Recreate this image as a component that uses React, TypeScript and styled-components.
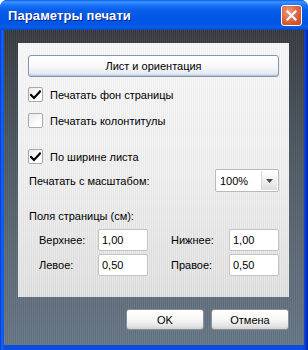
import styled, { createGlobalStyle } from "styled-components";

// ── Global ────────────────────────────────────────────────────────────────────

const GlobalStyle = createGlobalStyle`
  html, body { margin: 0; padding: 0; background: #ffffff; }
  * { box-sizing: border-box; }
  body { font-family: "Liberation Sans", Arial, sans-serif; font-size: 11px; color: #000; }
`;

// ── Window chrome ─────────────────────────────────────────────────────────────

const Window = styled.div`
  width: 308px;
  height: 350px;
  display: flex;
  flex-direction: column;
  border-radius: 7px 7px 0 0;
  overflow: hidden;
  background: linear-gradient(90deg, #0831d9 0, #166aee 2px, #0a4ee0 4px, #0a4ee0 303px, #0b39c6 306px, #001ea0 308px);
`;

const TitleBar = styled.div`
  height: 30px;
  flex: none;
  display: flex;
  align-items: center;
  justify-content: space-between;
  padding: 0 6px 0 8px;
  background: linear-gradient(
    180deg,
    #0a5fe8 0,
    #3d95ff 2px,
    #1b74fa 5px,
    #0a5fe8 10px,
    #0058e6 18px,
    #0055e5 24px,
    #0a5fe8 27px,
    #0646c8 30px
  );
`;

const Title = styled.span`
  font-family: "Liberation Sans", Arial, sans-serif;
  font-weight: bold;
  font-size: 13px;
  color: #ffffff;
  text-shadow: 1px 1px 0 #0a1e8a;
  letter-spacing: 0.1px;
`;

const CloseBtn = styled.div`
  width: 21px;
  height: 21px;
  border: 1px solid #ffffff;
  border-radius: 3px;
  background: radial-gradient(circle at 35% 30%, #f09a7a 0, #e06a44 45%, #c8401c 100%);
  display: flex;
  align-items: center;
  justify-content: center;
`;

const Frame = styled.div`
  flex: 1;
  margin: 0 4px 5px 4px;
  display: flex;
  flex-direction: column;
  background:
    repeating-linear-gradient(90deg, rgba(255, 255, 255, 0.06) 0 1px, rgba(0, 0, 0, 0.06) 1px 2px),
    linear-gradient(180deg, #363a3f 0, #4b5660 35%, #5c6a77 70%, #667686 100%);
`;

// ── Panel ─────────────────────────────────────────────────────────────────────

const Panel = styled.div`
  margin: 13px 15px 0 14px;
  height: 254px;
  padding: 12px 10px 0 10px;
  display: flex;
  flex-direction: column;
  background:
    repeating-linear-gradient(90deg, rgba(255, 255, 255, 0.35) 0 1px, rgba(0, 0, 0, 0.015) 1px 2px),
    linear-gradient(180deg, #f5f5f5 0, #ececec 50%, #dadada 100%);
`;

const WideButton = styled.button`
  height: 22px;
  width: 100%;
  font-family: inherit;
  font-size: 11px;
  color: #000;
  border: 1px solid #8197b3;
  border-radius: 3px;
  background: linear-gradient(180deg, #ffffff 0, #f8f9fb 50%, #e6ebf2 85%, #cfd8e4 100%);
  box-shadow: inset 0 -1px 0 #b7c4d6;
  padding: 0;
`;

const CheckRow = styled.div<{ $mt: number }>`
  display: flex;
  align-items: center;
  gap: 7px;
  height: 15px;
  margin-top: ${(p) => p.$mt}px;
`;

const Box = styled.div`
  width: 15px;
  height: 15px;
  border: 1px solid #a9a9a9;
  border-radius: 2px;
  background: linear-gradient(135deg, #e8e8e8 0, #ffffff 70%);
  display: flex;
  align-items: center;
  justify-content: center;
`;

const Label = styled.span`
  font-size: 11px;
  color: #000;
  white-space: nowrap;
`;

const ScaleRow = styled.div`
  display: flex;
  align-items: center;
  justify-content: space-between;
  margin-top: 5px;
  padding-left: 1px;
`;

const Select = styled.div`
  width: 64px;
  height: 23px;
  border: 1px solid #b9b9b9;
  border-radius: 2px;
  background: #ffffff;
  display: flex;
  align-items: stretch;
`;

const SelectValue = styled.span`
  flex: 1;
  padding: 0 0 0 4px;
  display: flex;
  align-items: center;
  font-size: 11px;
`;

const SelectArrow = styled.div`
  width: 16px;
  margin: 1px;
  border-left: 1px solid #d6d6d6;
  background: linear-gradient(180deg, #ffffff 0, #eeeeee 60%, #dddddd 100%);
  display: flex;
  align-items: center;
  justify-content: center;
`;

const SectionLabel = styled.div`
  margin-top: 18px;
  padding-left: 1px;
  font-size: 11px;
`;

const MarginGrid = styled.div`
  margin-top: 7px;
  display: grid;
  grid-template-columns: 70px 50px 1fr 50px;
  grid-auto-rows: 22px;
  row-gap: 3px;
  align-items: center;
`;

const MarginLabel = styled.span<{ $pl: number }>`
  font-size: 11px;
  padding-left: ${(p) => p.$pl}px;
`;

const NumInput = styled.div`
  height: 22px;
  border: 1px solid #c3c3c3;
  border-radius: 2px;
  background: #ffffff;
  padding-left: 3px;
  display: flex;
  align-items: center;
  font-size: 11px;
`;

// ── Footer ────────────────────────────────────────────────────────────────────

const Footer = styled.div`
  display: flex;
  justify-content: flex-end;
  gap: 7px;
  padding: 12px 15px 0 0;
`;

const DlgButton = styled.button`
  width: 78px;
  height: 21px;
  font-family: inherit;
  font-size: 11px;
  color: #000;
  border: 1px solid #8a8f96;
  border-radius: 3px;
  background: linear-gradient(180deg, #ffffff 0, #f7f7f7 50%, #e3e3e3 85%, #d0d0d0 100%);
  padding: 0;
`;

// ── Icons ─────────────────────────────────────────────────────────────────────

function Check() {
  return (
    <svg width="11" height="10" viewBox="0 0 11 10">
      <path d="M1 5 L4 8 L10 1.5" fill="none" stroke="#000" strokeWidth="2.2" strokeLinecap="square" />
    </svg>
  );
}

function CloseX() {
  return (
    <svg width="11" height="11" viewBox="0 0 11 11">
      <path d="M1.5 1.5 L9.5 9.5 M9.5 1.5 L1.5 9.5" stroke="#fff" strokeWidth="2.2" strokeLinecap="square" />
    </svg>
  );
}

function DropArrow() {
  return (
    <svg width="7" height="4" viewBox="0 0 7 4">
      <path d="M0 0 H7 L3.5 4 Z" fill="#4a4a4a" />
    </svg>
  );
}

// ── Component ─────────────────────────────────────────────────────────────────

export default function App() {
  return (
    <>
      <GlobalStyle />
      <Window>
        <TitleBar>
          <Title>Параметры печати</Title>
          <CloseBtn>
            <CloseX />
          </CloseBtn>
        </TitleBar>
        <Frame>
          <Panel>
            <WideButton>Лист и ориентация</WideButton>

            <CheckRow $mt={10}>
              <Box><Check /></Box>
              <Label>Печатать фон страницы</Label>
            </CheckRow>
            <CheckRow $mt={11}>
              <Box />
              <Label>Печатать колонтитулы</Label>
            </CheckRow>
            <CheckRow $mt={21}>
              <Box><Check /></Box>
              <Label>По ширине листа</Label>
            </CheckRow>

            <ScaleRow>
              <Label>Печатать с масштабом:</Label>
              <Select>
                <SelectValue>100%</SelectValue>
                <SelectArrow><DropArrow /></SelectArrow>
              </Select>
            </ScaleRow>

            <SectionLabel>Поля страницы (см):</SectionLabel>

            <MarginGrid>
              <MarginLabel $pl={11}>Верхнее:</MarginLabel>
              <NumInput>1,00</NumInput>
              <MarginLabel $pl={23}>Нижнее:</MarginLabel>
              <NumInput>1,00</NumInput>
              <MarginLabel $pl={11}>Левое:</MarginLabel>
              <NumInput>0,50</NumInput>
              <MarginLabel $pl={23}>Правое:</MarginLabel>
              <NumInput>0,50</NumInput>
            </MarginGrid>
          </Panel>
          <Footer>
            <DlgButton>OK</DlgButton>
            <DlgButton>Отмена</DlgButton>
          </Footer>
        </Frame>
      </Window>
    </>
  );
}
